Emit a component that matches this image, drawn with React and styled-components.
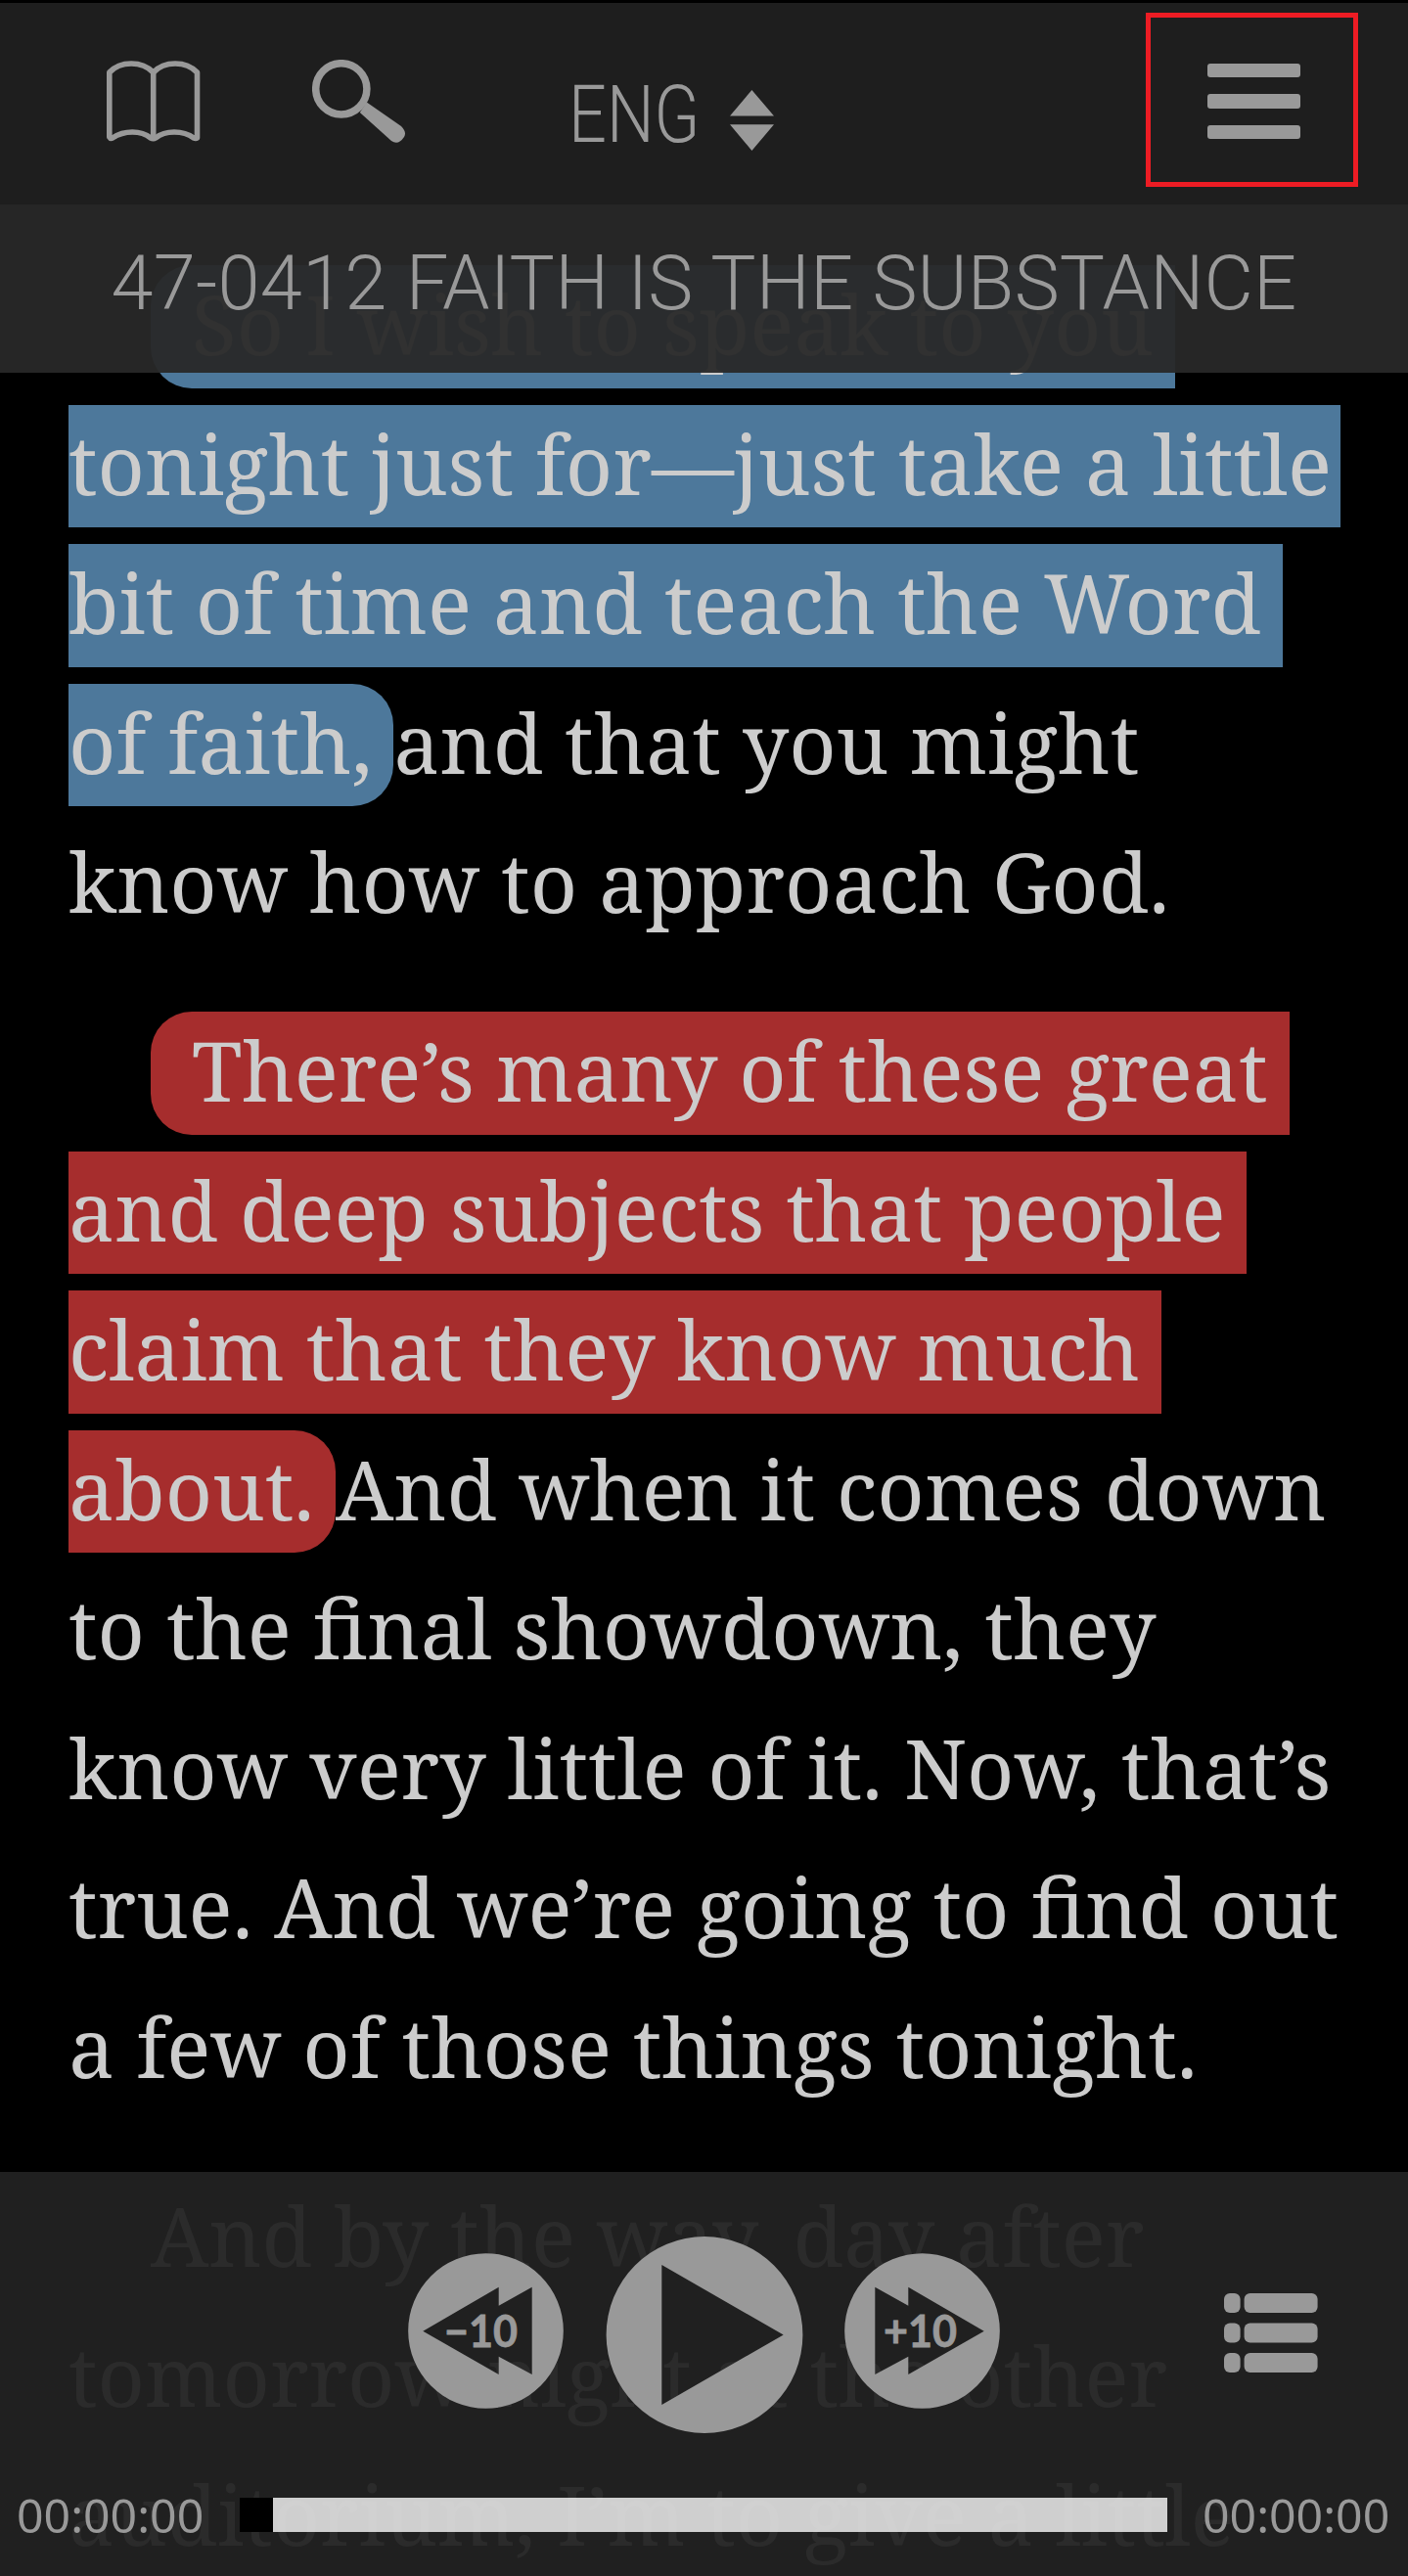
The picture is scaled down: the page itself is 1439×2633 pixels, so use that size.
import React from 'react';
import styled, { createGlobalStyle } from 'styled-components'

const GlobalStyle = createGlobalStyle`
  body {
    margin: 0;
    background: #000;
  }
`
const Screen = styled.div`
  position: relative;
  width: 1439px;
  height: 2633px;
  overflow: hidden;
  background: #000;
`
const Header = styled.header`
  position: absolute;
  top: 0;
  left: 0;
  right: 0;
`
const Toolbar = styled.div`
  display: flex;
  align-items: center;
  box-sizing: border-box;
  height: 209px;
  padding: 0 51px 5px 109px;
  border-top: 3px solid #000;
  background: #1e1e1e;
`
const SearchIcon = styled.svg`
  margin-left: 114px;
`
const Language = styled.div`
  display: flex;
  align-items: center;
  margin-left: 166px;
  margin-top: 39px;
`
const LanguageName = styled.span`
  width: 165px;
  margin-bottom: 11px;
  font-family: Roboto, sans-serif;
  font-size: 81px;
  font-weight: 300;
  line-height: 90px;
  color: #999;
  transform: scaleX(0.845);
  transform-origin: left;
`
const MenuButton = styled.div`
  display: flex;
  flex-direction: column;
  align-items: center;
  justify-content: center;
  gap: 17px;
  box-sizing: border-box;
  width: 217px;
  height: 178px;
  margin-left: auto;
  margin-bottom: 3px;
  padding: 3px 0 0 4px;
  border: 5px solid #ed1c24;
`
const MenuBar = styled.span`
  width: 95.5px;
  height: 14.3px;
  border-radius: 3px;
  background: #999;
`
const TitleBar = styled.div`
  height: 172px;
  background: rgba(40, 40, 40, 0.95);
  text-align: center;
`
const Title = styled.h1`
  margin: 0;
  padding-top: 31px;
  font-family: Roboto, sans-serif;
  font-size: 77.6px;
  font-weight: 300;
  letter-spacing: 0.22px;
  line-height: 100px;
  white-space: nowrap;
  color: #999;
`
const Article = styled.article`
  padding: 262.6px 69px 0 70px;
  font-family: "Noto Serif", "Droid Serif", "DejaVu Serif", serif;
  font-size: 84px;
  color: #ccc;
`
const Paragraph = styled.div`
  margin-bottom: 50.8px;
`
const Line = styled.div`
  display: flex;
  align-items: center;
  height: 142.5px;
  padding-left: ${props => props.$indent ? '84px' : '0'};
  white-space: pre;
`
const Mark = styled.span`
  box-sizing: border-box;
  height: 125.4px;
  max-width: 1300px;
  line-height: 119px;
  padding-left: ${props => props.$start ? '42px' : '0'};
  border-radius: ${props => props.$start ? '42px 0 0 42px' : props.$end ? '0 42px 42px 0' : '0'};
  background: ${props => props.$color};
`
const Plain = styled.span`
  height: 125.4px;
  line-height: 119px;
`
const Player = styled.footer`
  position: absolute;
  left: 0;
  right: 0;
  bottom: 0;
  box-sizing: border-box;
  height: 413px;
  border-bottom: 1px solid #231f20;
  background: rgba(34, 34, 34, 0.95);
`
const Controls = styled.div`
  display: flex;
  align-items: center;
  height: 201px;
  padding: 66px 92px 0 417px;
`
const SkipIcon = styled.svg`
  margin-bottom: 8px;
`
const PlayIcon = styled.svg`
  margin: 0 42px 0 43px;
`
const ListIcon = styled.svg`
  margin-left: auto;
  margin-bottom: 5px;
`
const Timeline = styled.div`
  display: flex;
  align-items: center;
  justify-content: space-between;
  height: 35px;
  margin-top: 66px;
  padding: 0 18px 0 17px;
`
const Time = styled.span`
  width: 192px;
  font-family: "Noto Sans", sans-serif;
  font-size: 48.2px;
  line-height: 35px;
  color: #999;
`
const Track = styled.div`
  width: 948px;
  height: 35px;
  background: rgba(251, 251, 251, 0.8);
`
const Thumb = styled.div`
  width: 34px;
  height: 35px;
  background: #000;
`

const BLUE = '#4d789b'
const RED = '#a62d2d'

const BookIcon = () => (
  <svg width="96" height="84" viewBox="0 0 96 84" fill="none" stroke="#999" strokeWidth="5.6" strokeLinejoin="round">
    <path d="M2.8 12 C14 0 36 0 47.7 12 C59 0 81 0 92.5 12 V79 Q91 80 89 79 C78 71 60 71 50 79 Q47.7 80.5 45 79 C35 71 18 71 6 79 Q4 80 2.8 78 Z" />
    <path d="M47.7 12 V80" />
  </svg>
)

const Skip = ({ back }) => (
  <SkipIcon width="159" height="159" viewBox="0 0 159 159" fill="#999">
    <path
      fillRule="evenodd"
      d={'M79.5 .2 A79.3 79.3 0 1 0 79.5 158.8 A79.3 79.3 0 1 0 79.5 .2 Z ' + (back
        ? 'M15.3 79.7 L92.7 34.7 V53.7 L126.7 34.7 V124 L92.7 105.7 V124 Z'
        : 'M142.7 79.7 L65.3 34.7 V53.7 L31.3 34.7 V124 L65.3 105.7 V124 Z')}
    />
    <text x={back ? 37 : 40} y="96" fontFamily="Lato, sans-serif" fontWeight="700" fontSize="45.5" stroke="#999" strokeWidth="0.8" textLength="75" lengthAdjust="spacingAndGlyphs">
      {back ? '−10' : '+10'}
    </text>
  </SkipIcon>
)

const App = () => {
  return (
    <Screen>
      <GlobalStyle />
      <Article>
        <Paragraph>
          <Line $indent><Mark $start $color={BLUE}>So I wish to speak to you </Mark></Line>
          <Line><Mark $color={BLUE}>tonight just for—just take a little </Mark></Line>
          <Line><Mark $color={BLUE}>bit of time and teach the Word </Mark></Line>
          <Line><Mark $end $color={BLUE}>of faith, </Mark><Plain>and that you might</Plain></Line>
          <Line><Plain>know how to approach God.</Plain></Line>
        </Paragraph>
        <Paragraph>
          <Line $indent><Mark $start $color={RED}>There’s many of these great </Mark></Line>
          <Line><Mark $color={RED}>and deep subjects that people </Mark></Line>
          <Line><Mark $color={RED}>claim that they know much </Mark></Line>
          <Line><Mark $end $color={RED}>about. </Mark><Plain>And when it comes down</Plain></Line>
          <Line><Plain>to the final showdown, they</Plain></Line>
          <Line><Plain>know very little of it. Now, that’s</Plain></Line>
          <Line><Plain>true. And we’re going to find out</Plain></Line>
          <Line><Plain>a few of those things tonight.</Plain></Line>
        </Paragraph>
        <Paragraph>
          <Line $indent><Plain>And by the way, day after</Plain></Line>
          <Line><Plain>tomorrow night at the other</Plain></Line>
          <Line><Plain>auditorium, I’m to give a little</Plain></Line>
        </Paragraph>
      </Article>
      <Header>
        <Toolbar>
          <BookIcon />
          <SearchIcon width="96" height="86" viewBox="0 0 96 86">
            <circle cx="29.8" cy="29.8" r="26.1" fill="none" stroke="#999" strokeWidth="7.5" />
            <path d="M55.8 43.6 L91 68 Q97 74 94 79 Q88 88 81 83 L48.8 54 Z" fill="#999" />
          </SearchIcon>
          <Language>
            <LanguageName>ENG</LanguageName>
            <svg width="45" height="62" viewBox="0 0 45 62" fill="#999">
              <path d="M22.4 0 L45 26.5 H0 Z M0 35.3 H45 L22.4 62 Z" />
            </svg>
          </Language>
          <MenuButton>
            <MenuBar />
            <MenuBar />
            <MenuBar />
          </MenuButton>
        </Toolbar>
        <TitleBar>
          <Title>47-0412 FAITH IS THE SUBSTANCE</Title>
        </TitleBar>
      </Header>
      <Player>
        <Controls>
          <Skip back />
          <PlayIcon width="202" height="201" viewBox="0 0 202 201" fill="#999">
            <path fillRule="evenodd" d="M101 .1 A100.4 100.4 0 1 0 101 200.9 A100.4 100.4 0 1 0 101 .1 Z M57.3 29 V172 L181.7 100.5 Z" />
          </PlayIcon>
          <Skip />
          <ListIcon width="96" height="81" viewBox="0 0 96 81" fill="#999">
            {[0, 30.4, 61].map(y => (
              <g key={y}>
                <rect x="0" y={y} width="16.6" height="20" rx="6" />
                <rect x="20.6" y={y} width="75" height="20" rx="6" />
              </g>
            ))}
          </ListIcon>
        </Controls>
        <Timeline>
          <Time>00:00:00</Time>
          <Track><Thumb /></Track>
          <Time>00:00:00</Time>
        </Timeline>
      </Player>
    </Screen>
  )
}

export default App
